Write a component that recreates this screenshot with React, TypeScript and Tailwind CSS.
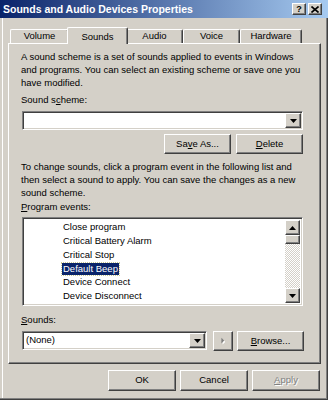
import React from "react";

const raised =
  "border border-t-white border-l-white border-r-[#404040] border-b-[#404040] shadow-[inset_-1px_-1px_0_#808080] bg-[#d4d0c8]";
const sunken =
  "border border-t-[#808080] border-l-[#808080] border-r-white border-b-white shadow-[inset_1px_1px_0_#404040,inset_-1px_-1px_0_#d4d0c8]";

function DownArrow({ color = "#000" }: { color?: string }) {
  return (
    <svg width="7" height="4" viewBox="0 0 7 4">
      <path d="M0 0h7L3.5 4z" fill={color} />
    </svg>
  );
}

function UpArrow() {
  return (
    <svg width="7" height="4" viewBox="0 0 7 4">
      <path d="M0 4h7L3.5 0z" fill="#000" />
    </svg>
  );
}

function Btn({ children, w, h = 20, disabled = false, def = false }: { children: React.ReactNode; w: number; h?: number; disabled?: boolean; def?: boolean }) {
  return (
    <div
      className={`${raised} flex items-center justify-center ${disabled ? "text-[#808080] [text-shadow:1px_1px_0_#fff]" : "text-black"} ${def ? "outline outline-1 outline-black" : ""}`}
      style={{ width: w, height: h }}
    >
      {children}
    </div>
  );
}

function Combo({ w, value }: { w: number; value?: string }) {
  return (
    <div className={`${sunken} bg-white flex items-stretch h-[19px] p-[1px]`} style={{ width: w }}>
      <div className="flex-1 flex items-center pl-[2px] text-black">{value}</div>
      <div className={`${raised} w-[16px] flex items-center justify-center`}>
        <DownArrow />
      </div>
    </div>
  );
}

const events = [
  "Close program",
  "Critical Battery Alarm",
  "Critical Stop",
  "Default Beep",
  "Device Connect",
  "Device Disconnect",
];

export default function App() {
  return (
    <div className="w-[328px] h-[400px] bg-[#d4d0c8] flex flex-col font-['Liberation_Sans',Arial,sans-serif] text-[9.5px] text-black shadow-[inset_-1px_-1px_0_#404040,inset_-2px_-2px_0_#808080,inset_2px_0_0_#d4d0c8,inset_3px_0_0_#ffffff] overflow-hidden select-none">
      {/* Title bar */}
      <div className="h-[18px] shrink-0 flex items-center bg-[linear-gradient(to_right,#0a246a,#a6caf0)]">
        <div className="pl-[3px] text-white font-bold text-[10.5px] flex-1 leading-none">
          Sounds and Audio Devices Properties
        </div>
        <div className="flex gap-[2px] pr-[6px]">
          <div className={`${raised} w-[14px] h-[12px] flex items-center justify-center text-[9px] font-bold leading-none`}>?</div>
          <div className={`${raised} w-[14px] h-[12px] flex items-center justify-center`}>
            <svg width="8" height="7" viewBox="0 0 8 7">
              <path d="M0.5 0.5L7.5 6.5M7.5 0.5L0.5 6.5" stroke="#000" strokeWidth="1.6" />
            </svg>
          </div>
        </div>
      </div>

      {/* Tabs */}
      <div className="mt-[9px] h-[16px] flex items-end pl-[10px] shrink-0">
        {[
          ["Volume", 59],
          ["Sounds", 57],
          ["Audio", 57],
          ["Voice", 57],
          ["Hardware", 62],
        ].map(([name, w]) => {
          const sel = name === "Sounds";
          return sel ? (
            <div
              key={name as string}
              className="relative z-10 -mx-[2px] -mb-[1px] h-[17px] bg-[#d4d0c8] border-t border-l border-t-white border-l-white border-r border-r-[#404040] shadow-[inset_-1px_0_0_#808080] rounded-t-[2px] flex items-start justify-center pt-[2px]"
              style={{ width: (w as number) + 4 }}
            >
              {name}
            </div>
          ) : (
            <div
              key={name as string}
              className="h-[14px] bg-[#d4d0c8] border-t border-l border-t-white border-l-white border-r border-r-[#404040] shadow-[inset_-1px_0_0_#808080] rounded-t-[2px] flex items-center justify-center"
              style={{ width: w as number }}
            >
              {name}
            </div>
          );
        })}
      </div>

      {/* Panel */}
      <div className={`ml-[8px] w-[313px] h-[321px] shrink-0 ${raised} flex flex-col pl-[12px]`}>
        <div className="pt-[6px] leading-[13px]">
          <div>A sound scheme is a set of sounds applied to events in Windows</div>
          <div>and programs. You can select an existing scheme or save one you</div>
          <div>have modified.</div>
        </div>
        <div className="mt-[4px] leading-[13px]">
          Sound s<u>c</u>heme:
        </div>
        <div className="mt-[5px] ml-[1px]">
          <Combo w={281} />
        </div>
        <div className="mt-[4px] flex justify-end gap-[5px] w-[282px]">
          <Btn w={67}>
            Sa<u>v</u>e As...
          </Btn>
          <Btn w={67}>
            <u>D</u>elete
          </Btn>
        </div>
        <div className="mt-[6px] leading-[13px]">
          <div>To change sounds, click a program event in the following list and</div>
          <div>then select a sound to apply. You can save the changes as a new</div>
          <div>sound scheme.</div>
        </div>
        <div className="mt-[1px] leading-[13px]">
          <u>P</u>rogram events:
        </div>
        <div className={`mt-[4px] ml-[1px] w-[281px] h-[89px] bg-white ${sunken} flex p-[2px]`}>
          <div className="flex-1 flex flex-col pt-[0px]">
            {events.map((e) => (
              <div key={e} className="h-[14px] flex items-center pl-[37px]">
                {e === "Default Beep" ? (
                  <span className="bg-[#0a246a] text-white px-[1px] h-[12px] leading-[12px] outline outline-1 outline-dotted outline-[#c8c890]">
                    {e}
                  </span>
                ) : (
                  <span className="px-[1px]">{e}</span>
                )}
              </div>
            ))}
          </div>
          {/* Scrollbar */}
          <div className="w-[15px] flex flex-col bg-[repeating-conic-gradient(#ffffff_0%_25%,#d4d0c8_0%_50%)] bg-[length:2px_2px]">
            <div className={`${raised} h-[15px] flex items-center justify-center`}>
              <UpArrow />
            </div>
            <div className={`${raised} h-[9px]`} />
            <div className="flex-1" />
            <div className={`${raised} h-[15px] flex items-center justify-center`}>
              <DownArrow />
            </div>
          </div>
        </div>
        <div className="mt-[7px] leading-[13px]">
          <u>S</u>ounds:
        </div>
        <div className="mt-[5px] ml-[1px] flex items-start">
          <Combo w={185} value="(None)" />
          <div className="ml-[6px]">
            <Btn w={20}>
              <svg width="4" height="8" viewBox="0 0 5 9">
                <path d="M1 1v7l3.5-3.5z" fill="#fff" transform="translate(1 1)" />
                <path d="M0 0v7l3.5-3.5z" fill="#808080" transform="translate(0.5 0.5)" />
              </svg>
            </Btn>
          </div>
          <div className="ml-[4px]">
            <Btn w={67}>
              <u>B</u>rowse...
            </Btn>
          </div>
        </div>
      </div>

      {/* Bottom buttons */}
      <div className="mt-[6px] flex justify-end gap-[4px] pr-[8px]">
        <Btn w={68} h={21}>OK</Btn>
        <Btn w={68} h={21}>Cancel</Btn>
        <Btn w={68} h={21} disabled>
          <u>A</u>pply
        </Btn>
      </div>
    </div>
  );
}
